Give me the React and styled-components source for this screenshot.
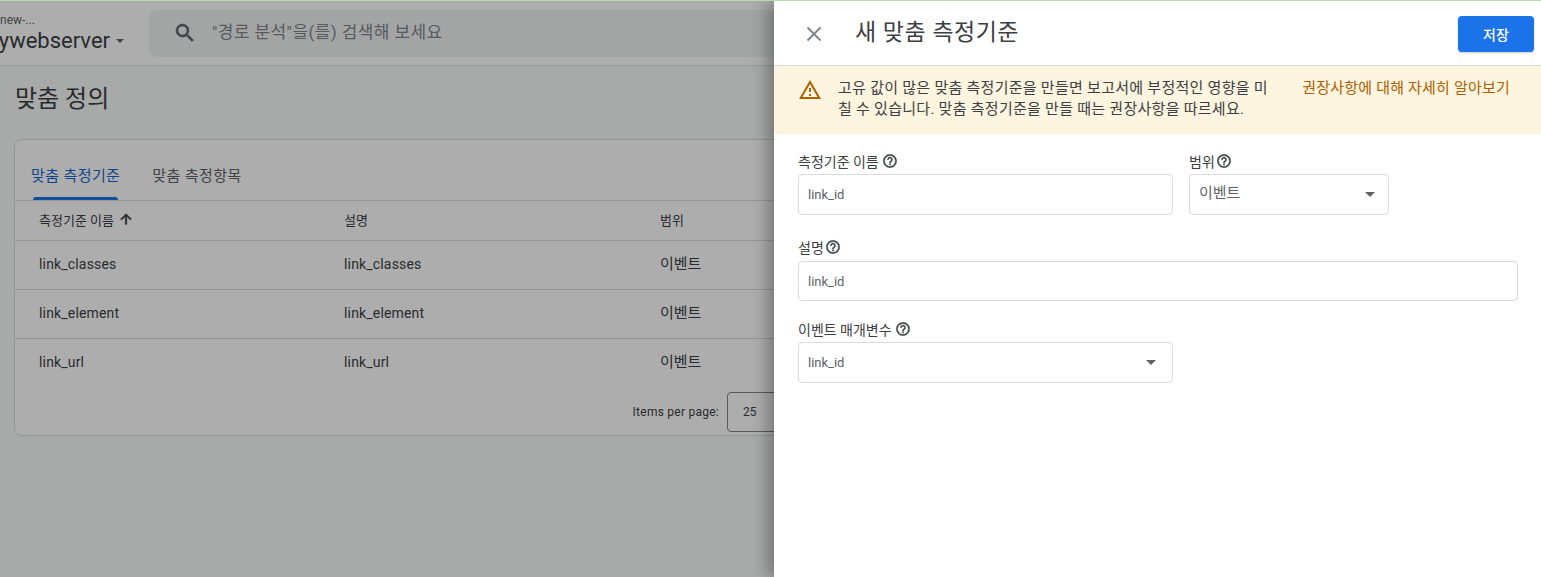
import React from "react";
import styled, { createGlobalStyle } from "styled-components";

const FONT = `Roboto, "Noto Sans CJK KR", "Noto Sans", sans-serif`;

const Global = createGlobalStyle`
  html, body { margin: 0; padding: 0; height: 100%; background: #f8f9fa; }
  #root { height: 100%; }
  * { box-sizing: border-box; }
  body { font-family: ${FONT}; overflow: hidden; }
`;

const Screen = styled.div`
  position: relative;
  width: 1541px;
  height: 577px;
  overflow: hidden;
  background: #f8f9fa;
  border-top: 1px solid #b4dcb4;
`;
const Page = styled.div`
  display: flex;
  flex-direction: column;
  height: 100%;
`;
const TopBar = styled.header`
  display: flex;
  align-items: center;
  height: 65px;
  flex: none;
  background: #ffffff;
  border-bottom: 1px solid #e0e0e0;
  padding-right: 20px;
`;
const Property = styled.div`
  display: flex;
  flex-direction: column;
  align-items: flex-end;
  width: 149px;
  flex: none;
  margin-top: 2px;
  padding-right: 25px;
  overflow: hidden;
  color: #3c4043;
`;
const Account = styled.div`
  align-self: flex-start;
  font-size: 12px;
  line-height: 14px;
  color: #5f6368;
  margin-top: -1px;
`;
const PropertyName = styled.div`
  display: flex;
  align-items: center;
  gap: 6px;
  font-size: 22px;
  line-height: 27px;
  white-space: nowrap;
`;
const Caret = styled.span`
  width: 0;
  height: 0;
  flex: none;
  border-left: ${(p) => p.$size || 4}px solid transparent;
  border-right: ${(p) => p.$size || 4}px solid transparent;
  border-top: ${(p) => (p.$size ? p.$size - 0.5 : 4)}px solid #5f6368;
`;
const Search = styled.div`
  flex: 1;
  height: 47px;
  display: flex;
  align-items: center;
  gap: 15px;
  padding-left: 24px;
  background: #f1f3f4;
  border-radius: 8px;
  color: #80868b;
`;
const SearchText = styled.span`
  font-size: 17px;
  letter-spacing: 0.4px;
  margin-top: -5px;
`;
const Content = styled.main`
  flex: 1;
  padding: 0 14px;
`;
const PageTitle = styled.h1`
  margin: 15px 0 22px 1px;
  font-weight: 400;
  font-size: 24px;
  line-height: 36px;
  color: #3c4043;
`;
const Card = styled.section`
  height: 297px;
  background: #ffffff;
  border: 1px solid #dadce0;
  border-radius: 8px;
  overflow: hidden;
`;
const Tabs = styled.div`
  display: flex;
  height: 61px;
  padding: 0 16px;
  gap: 32px;
  border-bottom: 1px solid #dadce0;
`;
const Tab = styled.div`
  position: relative;
  display: flex;
  align-items: center;
  padding: 8px 0 0;
  font-size: 15px;
  letter-spacing: 0.4px;
  color: ${(p) => (p.$active ? "#1967d2" : "#5f6368")};
  &::after {
    content: "";
    display: ${(p) => (p.$active ? "block" : "none")};
    position: absolute;
    left: 2px;
    right: 2px;
    bottom: 0;
    height: 3px;
    border-radius: 3px 3px 0 0;
    background: #1a73e8;
  }
`;
const Row = styled.div`
  display: grid;
  grid-template-columns: 305px 316px 1fr;
  align-items: center;
  padding-left: 24px;
  padding-bottom: ${(p) => (p.$head ? "3px" : "2px")};
  height: ${(p) => (p.$head ? "40px" : "49px")};
  border-bottom: 1px solid ${(p) => (p.$last ? "transparent" : "#dadce0")};
  font-size: ${(p) => (p.$head ? "13px" : "14px")};
  letter-spacing: ${(p) => (p.$head ? "0" : "0.17px")};
  color: #3c4043;
`;
const HeadCell = styled.div`
  display: flex;
  align-items: center;
  gap: 4px;
`;
const Scope = styled.div`
  font-size: 15px;
  letter-spacing: 0;
  margin-top: -3px;
`;
const Pager = styled.div`
  display: flex;
  align-items: center;
  justify-content: flex-end;
  width: 812px;
  height: 40px;
  margin-top: 4px;
  gap: 8px;
  font-size: 12px;
  letter-spacing: 0.25px;
  color: #3c4043;
`;
const PagerSelect = styled.div`
  display: flex;
  align-items: center;
  width: 100px;
  height: 40px;
  padding-left: 15px;
  letter-spacing: 0;
  border: 1px solid #80868b;
  border-radius: 4px;
`;
const Scrim = styled.div`
  position: absolute;
  inset: 0;
  background: rgba(0, 0, 0, 0.32);
`;
const Drawer = styled.aside`
  position: absolute;
  top: 0;
  bottom: 0;
  left: 774px;
  right: 0;
  display: flex;
  flex-direction: column;
  background: #ffffff;
  box-shadow: -6px 0 16px rgba(0, 0, 0, 0.32);
`;
const DrawerHead = styled.div`
  display: flex;
  align-items: center;
  height: 65px;
  flex: none;
  padding: 0 7px 0 32px;
  border-bottom: 1px solid #dadce0;
`;
const CloseBtn = styled.button`
  display: flex;
  width: 16px;
  height: 16px;
  margin-top: 1px;
  padding: 0;
  border: 0;
  background: none;
  color: #80868b;
`;
const DrawerTitle = styled.h2`
  flex: 1;
  margin: 0 0 0 33px;
  font-size: 23px;
  font-weight: 400;
  letter-spacing: 0.5px;
  line-height: 32px;
  color: #3c4043;
`;
const SaveBtn = styled.button`
  width: 76px;
  height: 36px;
  margin-top: 2px;
  border: 0;
  border-radius: 4px;
  background: #1a73e8;
  color: #ffffff;
  font-family: ${FONT};
  font-size: 14px;
  font-weight: 500;
  box-shadow: 0 1px 2px rgba(60, 64, 67, 0.3);
`;
const Banner = styled.div`
  display: flex;
  height: 68px;
  flex: none;
  padding: 12px 31px 0 24px;
  background: #fdf5df;
`;
const WarnIcon = styled.svg`
  width: 24px;
  height: 24px;
  flex: none;
  margin: 0 16px 0 0;
  color: #b06000;
`;
const BannerText = styled.div`
  width: 434px;
  flex: none;
  font-size: 15px;
  letter-spacing: 0.27px;
  line-height: 21px;
  color: #3c4043;
`;
const BannerLink = styled.a`
  margin-left: auto;
  font-size: 15px;
  letter-spacing: 0.2px;
  line-height: 21px;
  color: #b06000;
  white-space: nowrap;
`;
const Form = styled.form`
  display: flex;
  flex-direction: column;
  padding: 18px 23px 0 24px;
`;
const FieldRow = styled.div`
  display: flex;
  gap: 16px;
`;
const Field = styled.div`
  display: flex;
  flex-direction: column;
  gap: ${(p) => p.$gap ?? 4}px;
  width: ${(p) => p.$w || "100%"};
  margin-top: ${(p) => p.$mt || 0}px;
`;
const Label = styled.label`
  display: flex;
  align-items: center;
  gap: ${(p) => p.$gap ?? 3.5}px;
  height: 18px;
  font-size: 14px;
  color: #3c4043;
`;
const Input = styled.div`
  display: flex;
  align-items: center;
  justify-content: space-between;
  height: ${(p) => p.$h || 41}px;
  padding: 0 ${(p) => p.$pr || 9}px 0 9px;
  border: 1px solid #dadce0;
  border-radius: 4px;
  font-size: 13px;
  color: #5f6368;
`;
const SelectValue = styled.span`
  font-size: 15px;
  margin-top: -6px;
`;

const Help = () => (
  <svg width="16" height="16" viewBox="0 0 24 24" fill="#3c4043" stroke="#3c4043" strokeWidth="0.5">
    <path d="M11 18h2v-2h-2v2zm1-16C6.48 2 2 6.48 2 12s4.48 10 10 10 10-4.48 10-10S17.52 2 12 2zm0 18c-4.41 0-8-3.59-8-8s3.59-8 8-8 8 3.59 8 8-3.59 8-8 8zm0-14c-2.21 0-4 1.79-4 4h2c0-1.1.9-2 2-2s2 .9 2 2c0 2-3 1.75-3 5h2c0-2.25 3-2.5 3-5 0-2.21-1.79-4-4-4z" />
  </svg>
);

const rows = ["link_classes", "link_element", "link_url"];

export default function App() {
  return (
    <Screen>
      <Global />
      <Page>
        <TopBar>
          <Property>
            <Account>new-...</Account>
            <PropertyName>
              mywebserver
              <Caret />
            </PropertyName>
          </Property>
          <Search>
            <svg width="24" height="24" viewBox="0 0 24 24" fill="#5f6368" stroke="#5f6368" strokeWidth="0.6">
              <path d="M15.5 14h-.79l-.28-.27A6.47 6.47 0 0 0 16 9.5 6.5 6.5 0 1 0 9.5 16c1.61 0 3.09-.59 4.23-1.57l.27.28v.79l5 4.99L20.49 19l-4.99-5zm-6 0C7.01 14 5 11.99 5 9.5S7.01 5 9.5 5 14 7.01 14 9.5 11.99 14 9.5 14z" />
            </svg>
            <SearchText>"경로 분석"을(를) 검색해 보세요</SearchText>
          </Search>
        </TopBar>
        <Content>
          <PageTitle>맞춤 정의</PageTitle>
          <Card>
            <Tabs>
              <Tab $active>맞춤 측정기준</Tab>
              <Tab>맞춤 측정항목</Tab>
            </Tabs>
            <Row $head>
              <HeadCell>
                측정기준 이름
                <svg width="16" height="16" viewBox="0 0 24 24" fill="#3c4043" stroke="#3c4043">
                  <path d="M4 12l1.41 1.41L11 7.83V20h2V7.830l5.58 5.59L20 12l-8-8-8 8z" />
                </svg>
              </HeadCell>
              <div>설명</div>
              <div>범위</div>
            </Row>
            {rows.map((r, i) => (
              <Row key={r} $last={i === rows.length - 1}>
                <div>{r}</div>
                <div>{r}</div>
                <Scope>이벤트</Scope>
              </Row>
            ))}
            <Pager>
              Items per page:
              <PagerSelect>25</PagerSelect>
            </Pager>
          </Card>
        </Content>
      </Page>
      <Scrim />
      <Drawer>
        <DrawerHead>
          <CloseBtn aria-label="close">
            <svg width="16" height="16" viewBox="0 0 16 16" stroke="currentColor" strokeWidth="2" fill="none">
              <path d="M1.5 1.5l13 13M14.500 1.500l-13 13" />
            </svg>
          </CloseBtn>
          <DrawerTitle>새 맞춤 측정기준</DrawerTitle>
          <SaveBtn>저장</SaveBtn>
        </DrawerHead>
        <Banner>
          <WarnIcon viewBox="0 0 24 24" fill="currentColor">
            <path d="M12 5.99 19.53 19H4.47L12 5.99M12 2 1 21h22L12 2zm1 14h-2v2h2v-2zm0-6h-2v4h2v-4z" />
          </WarnIcon>
          <BannerText>
            고유 값이 많은 맞춤 측정기준을 만들면 보고서에 부정적인 영향을 미칠 수 있습니다. 맞춤 측정기준을 만들 때는 권장사항을 따르세요.
          </BannerText>
          <BannerLink>권장사항에 대해 자세히 알아보기</BannerLink>
        </Banner>
        <Form>
          <FieldRow>
            <Field $w="375px">
              <Label>
                측정기준 이름 <Help />
              </Label>
              <Input>link_id</Input>
            </Field>
            <Field $w="200px">
              <Label $gap={1}>
                범위
                <Help />
              </Label>
              <Input $pr={13}>
                <SelectValue>이벤트</SelectValue>
                <Caret $size={5.5} />
              </Input>
            </Field>
          </FieldRow>
          <Field $mt={23} $gap={5}>
            <Label $gap={1}>
              설명
              <Help />
            </Label>
            <Input $h={40}>link_id</Input>
          </Field>
          <Field $w="375px" $mt={19}>
            <Label>
              이벤트 매개변수 <Help />
            </Label>
            <Input $pr={16}>
              link_id
              <Caret $size={5.5} />
            </Input>
          </Field>
        </Form>
      </Drawer>
    </Screen>
  );
}
